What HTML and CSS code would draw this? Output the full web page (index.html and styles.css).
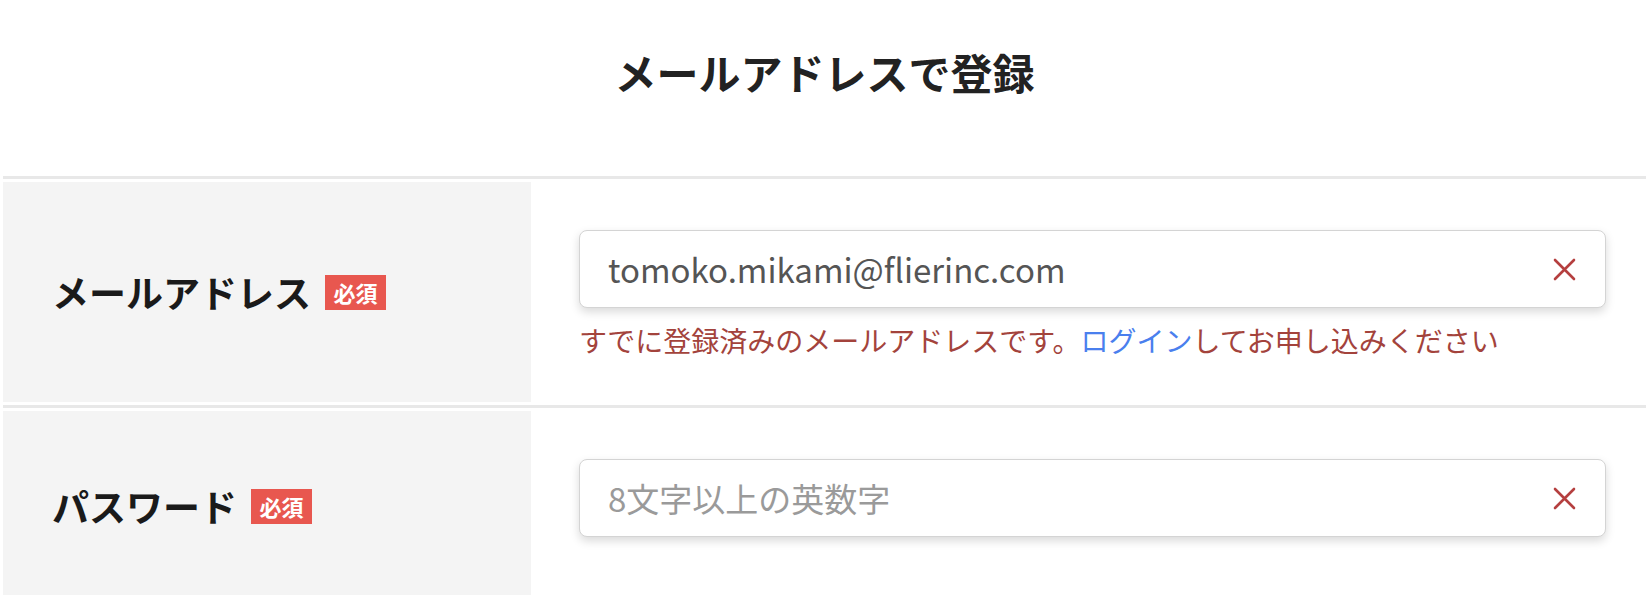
FILE: index.html
```html
<!DOCTYPE html>
<html lang="ja">
<head>
<meta charset="UTF-8">
<meta name="viewport" content="width=device-width, initial-scale=1.0">
<title>メールアドレスで登録</title>
<link rel="stylesheet" href="styles.css">
</head>
<body>

<div class="page">
    <h1 class="page-title">メールアドレスで登録</h1>

    <div class="form-row">
        <div class="form-label">
            <span>メールアドレス</span>
            <span class="required">必須</span>
        </div>
        <div class="form-field">
            <div class="input-box">
                <input type="email" class="text-input" value="tomoko.mikami@flierinc.com">
                <button type="button" class="clear-button" aria-label="クリア">
                    <svg width="23" height="23" viewBox="0 0 23 23"><path d="M2 2 L21 21 M21 2 L2 21" stroke="currentColor" stroke-width="2.6" stroke-linecap="round"/></svg>
                </button>
            </div>
            <p class="error-text">すでに登録済みのメールアドレスです。<a href="#" class="error-link">ログイン</a>してお申し込みください</p>
        </div>
    </div>

    <div class="form-row last-row">
        <div class="form-label">
            <span>パスワード</span>
            <span class="required">必須</span>
        </div>
        <div class="form-field">
            <div class="input-box">
                <input type="password" class="text-input" placeholder="8文字以上の英数字">
                <button type="button" class="clear-button" aria-label="クリア">
                    <svg width="23" height="23" viewBox="0 0 23 23"><path d="M2 2 L21 21 M21 2 L2 21" stroke="currentColor" stroke-width="2.6" stroke-linecap="round"/></svg>
                </button>
            </div>
        </div>
    </div>
</div>

</body>
</html>
```

FILE: styles.css
```css
/* page base */
body {
    margin: 0;
    padding: 0;
    background-color: #fff;
    font-family: "Noto Sans CJK JP", "Noto Sans", sans-serif;
    color: #1c1c1c;
}
.page {
    margin-left: 3px;
}
.page-title {
    margin: 0;
    padding: 40px 0 73px;
    font-size: 42px;
    line-height: 63px;
    font-weight: bold;
    text-align: center;
    color: #222;
}

/* one row of the form */
.form-row {
    display: grid;
    grid-template-columns: 528px 1fr;
    border-top: 3px solid #e8e8e8;
    padding: 3px 0;
}
.form-label {
    display: flex;
    align-items: center;
    padding-left: 49px;
    background-color: #f4f4f4;
    font-size: 37px;
    font-weight: bold;
    color: #1a1a1a;
}
.required {
    display: inline-block;
    margin-left: 14px;
    width: 61px;
    height: 35px;
    line-height: 35px;
    text-align: center;
    background-color: #e8574f;
    color: #fff;
    font-size: 22px;
    font-weight: bold;
}
.form-field {
    padding: 48px 40px 42px 48px;
}
.last-row .form-field {
    padding-bottom: 64px;
}

/* input with clear button */
.input-box {
    display: flex;
    align-items: center;
    height: 76px;
    border: 1px solid #d4d4d4;
    border-radius: 8px;
    background-color: #fff;
    box-shadow: 0 4px 10px rgba(0, 0, 0, 0.15);
}
.text-input {
    flex: 1;
    min-width: 0;
    border: none;
    outline: none;
    background: transparent;
    padding: 0 0 0 28px;
    font-family: "Noto Sans CJK JP", "Noto Sans", sans-serif;
    font-size: 33px;
    color: #555;
}
.text-input::placeholder {
    color: #9a9a9a;
}
.clear-button {
    display: flex;
    align-items: center;
    justify-content: center;
    margin-right: 29px;
    padding: 0;
    border: none;
    background: none;
    color: #b53f3f;
    cursor: pointer;
}
.error-text {
    margin: 12px 0 0;
    font-size: 28px;
    line-height: 40px;
    color: #a3433c;
}
.error-link {
    color: #4a7fee;
    text-decoration: none;
}
```
